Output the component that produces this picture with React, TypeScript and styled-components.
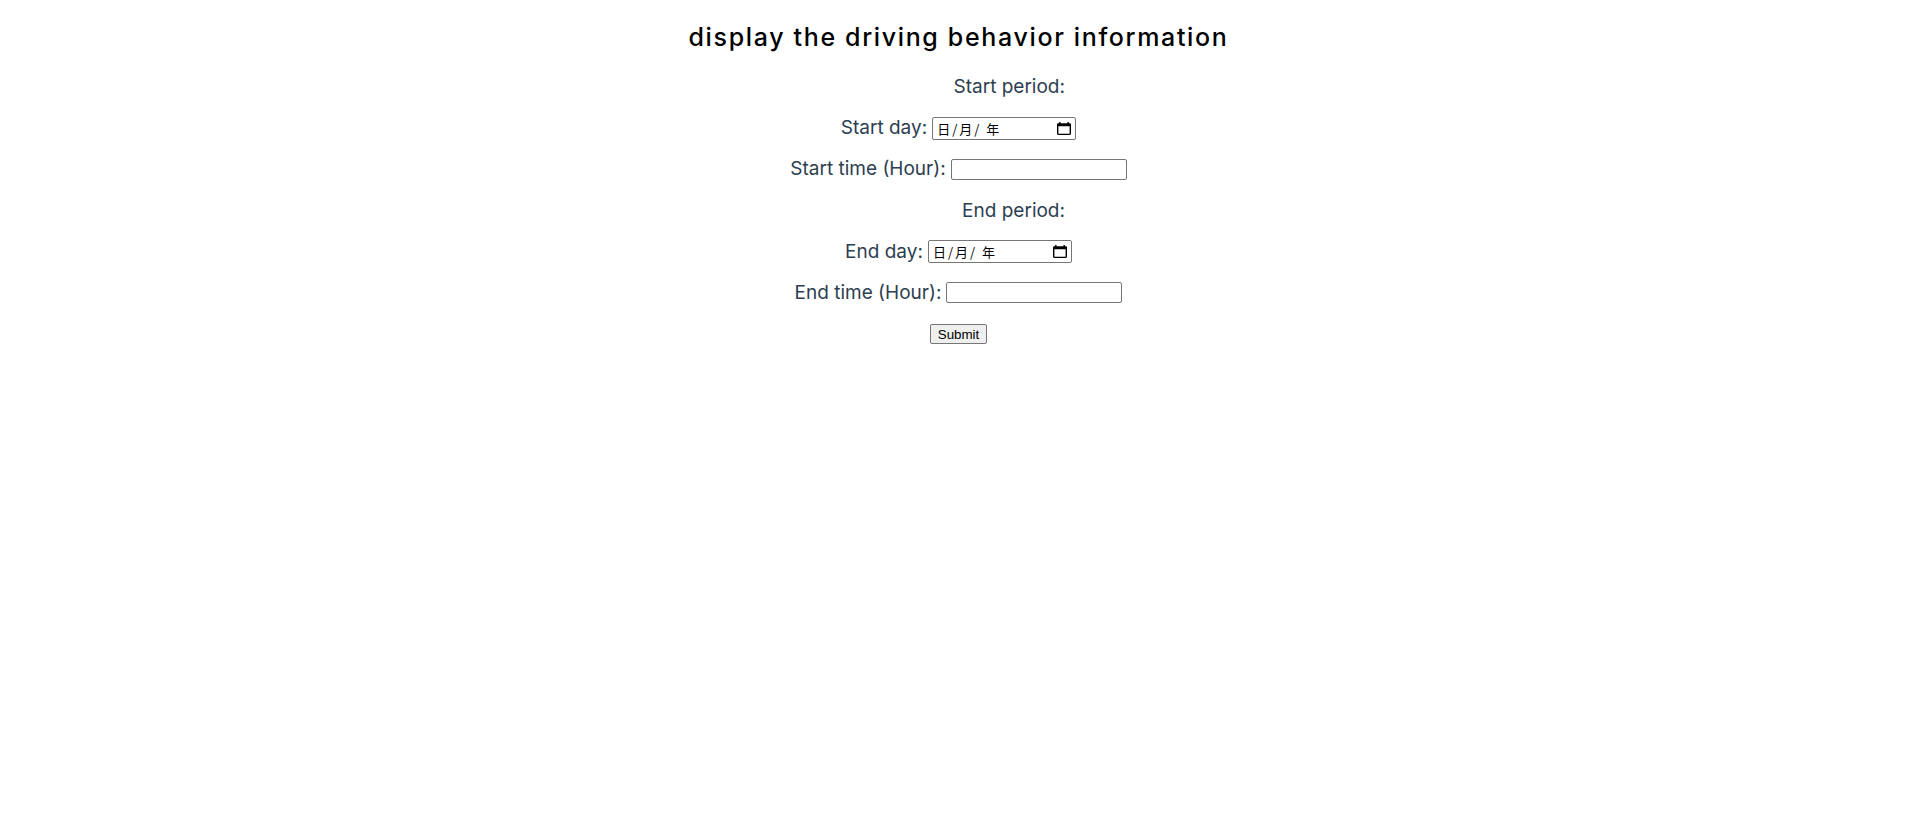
import React, { useState } from 'react';
import styled, { createGlobalStyle } from 'styled-components';

const GlobalStyle = createGlobalStyle`
  html, body {
    margin: 0;
    padding: 0;
    background: #fff;
  }
  body {
    font-family: Inter, "Noto Sans", sans-serif;
  }
`;

const Page = styled.div`
  padding-top: 22px;
  display: flex;
  flex-direction: column;
  align-items: center;
  color: #2c3e50;
`;

const Title = styled.h2`
  margin: 0;
  font-size: 25px;
  line-height: 30px;
  font-weight: 500;
  letter-spacing: 1.65px;
  color: #000;
`;

const Form = styled.form`
  margin-top: 23px;
  display: flex;
  flex-direction: column;
  align-items: center;
  gap: 17.2px;
`;

const Row = styled.div`
  height: 24px;
  display: flex;
  align-items: center;
  justify-content: center;
  gap: 5px;
`;

const PeriodHeading = styled.div`
  width: 213px;
  height: 24px;
  line-height: 24px;
  text-align: right;
  font-size: 19px;
`;

const Label = styled.label`
  font-size: 19px;
  line-height: 24px;
  white-space: nowrap;
`;

const DateBox = styled.div`
  box-sizing: border-box;
  width: 144px;
  height: 23px;
  border: 1px solid #767676;
  border-radius: 2px;
  background: #fff;
  display: flex;
  align-items: center;
  padding: 0 4px;
  color: #000;
  font-family: "Noto Sans CJK SC", "Liberation Sans", sans-serif;
  font-size: 13px;
`;

const DateText = styled.span`
  flex: 1;
  white-space: pre;
  letter-spacing: 2px;
`;

const TextInput = styled.input`
  box-sizing: border-box;
  width: 176px;
  height: 21px;
  border: 1px solid #767676;
  border-radius: 2px;
  padding: 1px 2px;
  font-family: "Liberation Sans", sans-serif;
  font-size: 13.333px;
  outline: none;
`;

const SubmitButton = styled.button`
  box-sizing: border-box;
  height: 20px;
  padding: 0 7px;
  border: 1px solid #767676;
  border-radius: 2px;
  background: #efefef;
  color: #000;
  font-family: "Liberation Sans", sans-serif;
  font-size: 13.333px;
  cursor: pointer;
`;

const CalendarIcon = () => (
  <svg width="14" height="13" viewBox="2 1 20 22" preserveAspectRatio="none">
    <path
      fill="#000"
      d="M20 3h-1V1h-2v2H7V1H5v2H4c-1.1 0-2 .9-2 2v16c0 1.1.9 2 2 2h16c1.1 0 2-.9 2-2V5c0-1.1-.9-2-2-2zm0 18H4V8h16v13z"
    />
  </svg>
);

const DateField = () => (
  <DateBox>
    <DateText>日/月/ 年</DateText>
    <CalendarIcon />
  </DateBox>
);

const App: React.FC = () => {
  const [startHour, setStartHour] = useState('');
  const [endHour, setEndHour] = useState('');

  return (
    <Page>
      <GlobalStyle />
      <Title>display the driving behavior information</Title>
      <Form onSubmit={e => e.preventDefault()}>
        <PeriodHeading>Start period:</PeriodHeading>
        <Row>
          <Label>Start day:</Label>
          <DateField />
        </Row>
        <Row>
          <Label>Start time (Hour):</Label>
          <TextInput value={startHour} onChange={e => setStartHour(e.target.value)} />
        </Row>
        <PeriodHeading>End period:</PeriodHeading>
        <Row>
          <Label>End day:</Label>
          <DateField />
        </Row>
        <Row>
          <Label>End time (Hour):</Label>
          <TextInput value={endHour} onChange={e => setEndHour(e.target.value)} />
        </Row>
        <Row>
          <SubmitButton type="submit">Submit</SubmitButton>
        </Row>
      </Form>
    </Page>
  );
};

export default App;
